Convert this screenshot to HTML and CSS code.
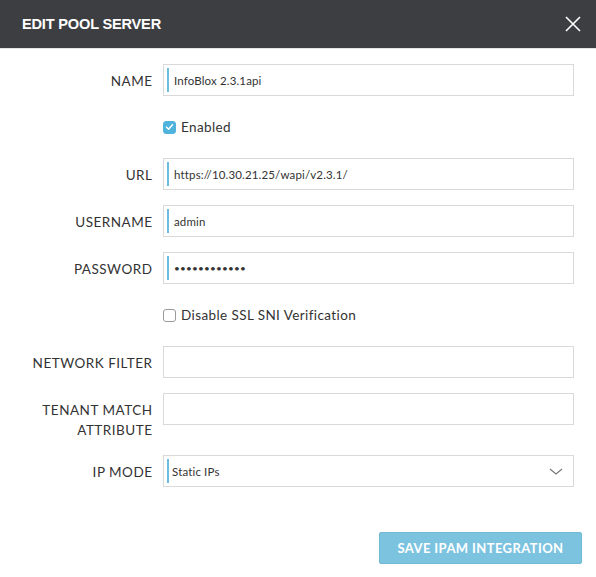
FILE: index.html
```html
<!DOCTYPE html>
<html>
<head>
<meta charset="utf-8">
<link rel="stylesheet" href="styles.css">
</head>
<body>
<div class="modal">
  <div class="header">
    <div class="title">EDIT POOL SERVER</div>
    <svg class="close" width="16" height="16" viewBox="0 0 16 16"><path d="M1 1 L15 15 M15 1 L1 15" stroke="#ffffff" stroke-width="1.6" fill="none"/></svg>
  </div>
  <div class="form">
    <div class="label">NAME</div>
    <div class="field"><span class="bar"></span><span class="val">InfoBlox 2.3.1api</span></div>

    <div></div>
    <div class="check"><span class="box on"><svg width="13" height="12" viewBox="0 0 13 12"><path d="M3 6.2 L5.4 8.6 L10 3.4" stroke="#fff" stroke-width="1.8" fill="none" stroke-linecap="round" stroke-linejoin="round"/></svg></span><span class="ctext">Enabled</span></div>

    <div class="label">URL</div>
    <div class="field"><span class="bar"></span><span class="val">https://10.30.21.25/wapi/v2.3.1/</span></div>

    <div class="label">USERNAME</div>
    <div class="field"><span class="bar"></span><span class="val">admin</span></div>

    <div class="label">PASSWORD</div>
    <div class="field"><span class="bar"></span><span class="val dots">••••••••••••</span></div>

    <div></div>
    <div class="check"><span class="box"></span><span class="ctext">Disable SSL SNI Verification</span></div>

    <div class="label">NETWORK FILTER</div>
    <div class="field"></div>

    <div class="label">TENANT MATCH<br>ATTRIBUTE</div>
    <div class="field"></div>

    <div class="label">IP MODE</div>
    <div class="field select"><span class="bar"></span><span class="val sel">Static IPs</span>
      <svg class="chev" width="14" height="7" viewBox="0 0 14 7"><path d="M1 1 L7 6 L13 1" stroke="#777" stroke-width="1.1" fill="none"/></svg>
    </div>
  </div>
  <div class="footer">
    <div class="btn">SAVE IPAM INTEGRATION</div>
  </div>
</div>
</body>
</html>
```

FILE: styles.css
```css
html, body {
  margin: 0;
  padding: 0;
  background: #ffffff;
}
body {
  font-family: Lato, "Open Sans", sans-serif;
  color: #333333;
}
.modal {
  width: 596px;
  height: 577px;
  display: flex;
  flex-direction: column;
}
.header {
  height: 48px;
  background: #3d3e41;
  border-bottom: 1px solid #e4e4e4;
  display: flex;
  align-items: center;
  justify-content: space-between;
  padding: 0 15px 0 22px;
}
.title {
  font-family: "Liberation Sans", Arial, sans-serif;
  font-weight: bold;
  font-size: 14.6px;
  color: #ffffff;
  letter-spacing: -0.2px;
}
.close {
  display: block;
}
.form {
  display: grid;
  grid-template-columns: 152px 1fr;
  column-gap: 11px;
  row-gap: 15px;
  padding: 15px 22px 0 0;
}
.label {
  text-align: right;
  font-size: 13.5px;
  letter-spacing: 0.5px;
  line-height: 20px;
  padding-top: 7px;
  color: #333;
  margin-right: -0.5px;
}
.field {
  height: 32px;
  box-sizing: border-box;
  border: 1px solid #d9d9d9;
  display: flex;
  align-items: center;
  padding-left: 3px;
  position: relative;
}
.bar {
  width: 2px;
  height: 24px;
  background: #6cbde0;
  flex: none;
}
.val {
  font-size: 11.5px;
  letter-spacing: 0.15px;
  margin-left: 5px;
  color: #333;
}
.val.sel {
  margin-left: 3px;
  font-size: 11.5px;
}
.dots {
  font-size: 10px;
  letter-spacing: 0.2px;
  color: #333;
}
.chev {
  position: absolute;
  right: 10px;
  top: 12px;
}
.check {
  height: 32px;
  display: flex;
  align-items: center;
}
.box {
  width: 11px;
  height: 11px;
  border: 1px solid #9a9a9a;
  border-radius: 3px;
  background: #fff;
  flex: none;
  display: flex;
  align-items: center;
  justify-content: center;
}
.box.on {
  background: #4fb3dc;
  border-color: #4fb3dc;
}
.box svg {
  display: block;
}
.ctext {
  font-size: 13.5px;
  letter-spacing: 0.4px;
  margin-left: 5px;
  color: #333;
}
.footer {
  display: flex;
  justify-content: flex-end;
  padding: 45px 14px 0 0;
}
.btn {
  width: 203px;
  height: 32px;
  box-sizing: border-box;
  background: #7cc3df;
  border: 1px solid #72b9d6;
  border-radius: 2px;
  color: #ffffff;
  font-weight: bold;
  font-size: 13px;
  letter-spacing: 0.4px;
  display: flex;
  align-items: center;
  justify-content: center;
}
```
